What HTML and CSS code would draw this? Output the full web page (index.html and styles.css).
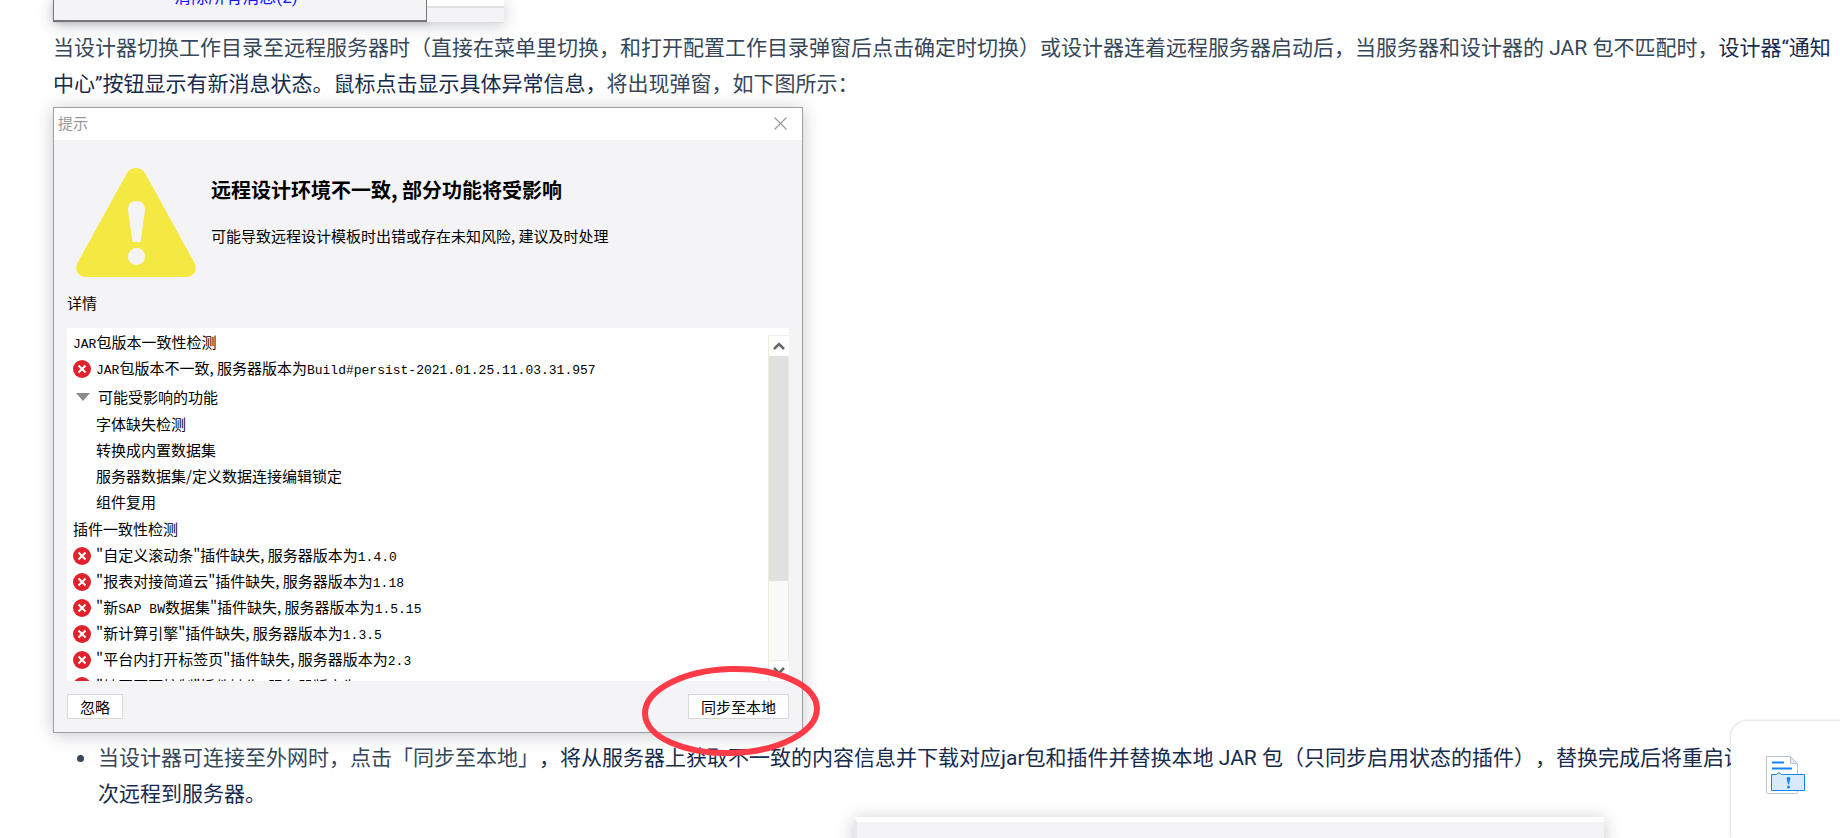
FILE: index.html
```html
<!DOCTYPE html>
<html lang="zh-CN">
<head>
    <meta charset="UTF-8">
    <meta name="viewport" content="width=device-width, initial-scale=1.0">
    <title>远程服务器</title>
    <link rel="stylesheet" href="styles.css">
</head>
<body>
    <svg class="defs" width="0" height="0">
        <symbol id="err" viewBox="0 0 18 18">
            <circle cx="9" cy="9" r="9" fill="#e0222d"/>
            <path d="M5.500 5.500l7 7M12.500 5.500l-7 7" stroke="#fff" stroke-width="2"/>
        </symbol>
    </svg>
    <main class="article">
        <div class="shot shot-top">
            <div class="shot-window">
                <a class="clear-link" href="#">清除所有消息(2)</a>
            </div>
            <div class="shot-side"></div>
        </div>

        <p class="text">当设计器切换工作目录至远程服务器时（直接在菜单里切换，和打开配置工作目录弹窗后点击确定时切换）或设计器连着远程服务器启动后，当服务器和设计器的 JAR 包不匹配时，<span class="dark">设计器“通知中心”按钮显示有新消息状态。鼠标点击显示具体异常信息，</span>将出现弹窗，如下图所示：</p>

        <section class="shot dialog">
            <header class="dialog-title">
                <span>提示</span>
                <button class="close" type="button" aria-label="关闭">
                    <svg width="13" height="13" viewBox="0 0 13 13"><path d="M.5 .5l12 12M12.5 .5l-12 12" stroke="#999" stroke-width="1.2"/></svg>
                </button>
            </header>
            <div class="dialog-body">
                <div class="alert">
                    <svg class="warn" width="120" height="110" viewBox="0 0 120 110">
                        <path d="M51 5Q54 0 60 0Q66 0 69 5L118 94Q121 100 119 104Q116 109 110 109H10Q4 109 1 104Q-1 99 2 94Z" fill="#f4e943"/>
                        <path d="M52 42Q52 33 60 33Q69 33 69 42L64.500 74H56.500Z" fill="#f4f4f7"/>
                        <circle cx="60.500" cy="88.500" r="8.500" fill="#f4f4f7"/>
                    </svg>
                    <div class="alert-text">
                        <h2>远程设计环境不一致, 部分功能将受影响</h2>
                        <p>可能导致远程设计模板时出错或存在未知风险, 建议及时处理</p>
                    </div>
                </div>
                <h3>详情</h3>
                <div class="details">
                    <div class="rows">
                        <div class="row"><span><span class="code">JAR</span>包版本一致性检测</span></div>
                        <div class="row"><svg class="err"><use href="#err"/></svg><span><span class="code">JAR</span>包版本不一致, 服务器版本为<span class="code">Build#persist-2021.01.25.11.03.31.957</span></span></div>
                        <div class="row toggle"><span class="caret"></span>可能受影响的功能</div>
                        <ul class="leaves">
                            <li>字体缺失检测</li>
                            <li>转换成内置数据集</li>
                            <li>服务器数据集/定义数据连接编辑锁定</li>
                            <li>组件复用</li>
                        </ul>
                        <div class="row plugins">插件一致性检测</div>
                        <div class="row"><svg class="err"><use href="#err"/></svg><span>"自定义滚动条"插件缺失, 服务器版本为<span class="code">1.4.0</span></span></div>
                        <div class="row"><svg class="err"><use href="#err"/></svg><span>"报表对接简道云"插件缺失, 服务器版本为<span class="code">1.18</span></span></div>
                        <div class="row"><svg class="err"><use href="#err"/></svg><span>"新<span class="code">SAP BW</span>数据集"插件缺失, 服务器版本为<span class="code">1.5.15</span></span></div>
                        <div class="row"><svg class="err"><use href="#err"/></svg><span>"新计算引擎"插件缺失, 服务器版本为<span class="code">1.3.5</span></span></div>
                        <div class="row"><svg class="err"><use href="#err"/></svg><span>"平台内打开标签页"插件缺失, 服务器版本为<span class="code">2.3</span></span></div>
                        <div class="row"><svg class="err"><use href="#err"/></svg><span>"地图页面控制"插件缺失, 服务器版本为</span></div>
                    </div>
                    <div class="scrollbar">
                        <button type="button" aria-label="向上"><svg width="12" height="8" viewBox="0 0 12 8"><path d="M1 7l5-5 5 5" fill="none" stroke="#666" stroke-width="2.500"/></svg></button>
                        <div class="track"><div class="thumb"></div></div>
                        <button type="button" aria-label="向下"><svg width="12" height="8" viewBox="0 0 12 8"><path d="M1 1l5 5 5-5" fill="none" stroke="#666" stroke-width="2.500"/></svg></button>
                    </div>
                </div>
                <footer class="actions">
                    <button type="button">忽略</button>
                    <button type="button">同步至本地</button>
                </footer>
            </div>
            <svg class="mark" width="180" height="92" viewBox="0 0 180 92">
                <ellipse cx="90" cy="46" rx="86" ry="42" fill="none" stroke="#ff3b48" stroke-width="6" transform="rotate(-2 90 46)"/>
            </svg>
        </section>

        <ul class="notes">
            <li class="text">当设计器可连接至外网时，点击「同步至本地」<span class="dark">，将从服务器上获取不一致的内容信息并下载对应jar包和插件并替换本地 JAR 包（只同步启用状态的插件），替换完成后将重启设计器，再次远程到服务器。</span></li>
        </ul>

        <div class="shot shot-next"></div>
    </main>

    <aside class="feedback">
        <button type="button" aria-label="文档反馈">
            <svg width="40" height="40" viewBox="0 0 40 40">
                <path d="M1.500 1.500H25L32.500 9V37.500Q32.500 38.500 31.500 38.500H2.500Q1.500 38.500 1.500 37.500Z" fill="#fff" stroke="#b9c4d6"/>
                <path d="M25.500 1.500V8.500H32.500Z" fill="#e3e7ee" stroke="#b9c4d6"/>
                <path d="M7 7.500H19M7 13.500H27" stroke="#1684fc" stroke-width="2"/>
                <path d="M6.500 19.500H11.500L14 17.500L16.500 19.500H39.500V35.500H6.500Z" fill="#d9eafd" stroke="#1684fc"/>
                <path d="M21.500 23Q23.500 21 25.500 23L24 29.500H23Z" fill="#1684fc"/>
                <circle cx="23.500" cy="32" r="1.500" fill="#1684fc"/>
            </svg>
        </button>
    </aside>
</body>
</html>
```

FILE: styles.css
```css
* {
    box-sizing: border-box;
}
body {
    margin: 0;
    height: 100vh;
    overflow: hidden;
    background: #fff;
    font-family: Roboto, "Noto Sans CJK SC", sans-serif;
    text-spacing-trim: space-all;
}
h2, h3, p, ul {
    margin: 0;
    padding: 0;
}
ul {
    list-style: none;
}
button {
    font-family: inherit;
    padding: 0;
    cursor: pointer;
}
.defs {
    display: none;
}
.article {
    padding: 0 6px 0 53px;
}
.text {
    font-size: 21px;
    line-height: 36px;
    color: #36475a;
}
.dark {
    color: #172b4d;
}
.shot {
    box-shadow: 0 2px 16px rgba(30, 40, 60, 0.25);
}

/* bottom of the message panel */
.shot-top {
    display: flex;
    width: 451px;
    height: 23px;
    margin-bottom: 7px;
    border-bottom: 1px solid #ddd;
}
.shot-window {
    display: flex;
    align-items: flex-end;
    justify-content: center;
    width: 374px;
    padding: 0 8px 13px 0;
    background: #f4f4f7;
    border: solid #777;
    border-width: 0 1px 2px;
    box-shadow: 2px 0 8px rgba(0, 0, 0, 0.2);
    overflow: hidden;
}
.clear-link {
    font-size: 17px;
    line-height: 20px;
    color: #1414ff;
    text-decoration: none;
}
.shot-side {
    flex: 1;
    background: #f4f4f7;
    border-top: 6px solid #fff;
    box-shadow: inset 0 2px #dfdfe1;
}

/* dialog */
.dialog {
    position: relative;
    z-index: 1;
    max-width: 750px;
    margin-top: 5px;
    background: #f4f4f7;
    border: 1px solid #a0a0a3;
    font-family: "Noto Sans CJK SC", sans-serif;
    font-size: 15px;
    line-height: 20px;
    color: #000;
}
.dialog-title {
    display: flex;
    justify-content: space-between;
    align-items: center;
    height: 32px;
    padding: 0 15px 2px 4px;
    background: #fff;
    color: #999;
}
.close {
    display: flex;
    border: none;
    background: none;
}
.dialog-body {
    padding: 28px 13px 13px;
}
.alert {
    display: flex;
    gap: 15px;
    padding-left: 9px;
}
.alert-text {
    padding-top: 8px;
}
h2 {
    font-size: 20px;
    line-height: 28px;
    margin-bottom: 22px;
}
h3 {
    margin: 15px 0;
    font-size: 15px;
    font-weight: normal;
}
.details {
    display: flex;
    height: 353px;
    background: #fff;
    overflow: hidden;
}
.rows {
    flex: 1;
    padding: 2px 0 0 6px;
    line-height: 26px;
}
.row {
    display: flex;
    align-items: center;
    gap: 5px;
    height: 26px;
    white-space: nowrap;
}
.toggle {
    gap: 8px;
    margin: 2px 0 1px;
    padding-left: 3px;
}
.leaves {
    padding-left: 23px;
}
.plugins {
    margin: 1px 0;
}
.code {
    font-family: "Liberation Mono", monospace;
    font-size: 13px;
}
.err {
    width: 18px;
    height: 18px;
}
.caret {
    border: solid transparent;
    border-width: 8px 7px 0;
    border-top-color: #8c8c8c;
}
.scrollbar {
    display: flex;
    flex-direction: column;
    width: 21px;
    margin-top: 7px;
    border-left: 1px solid #ececdc;
}
.scrollbar button {
    display: flex;
    align-items: center;
    justify-content: center;
    height: 21px;
    border: none;
    border-top: 1px solid #eee;
    background: #fff;
}
.track {
    flex: 1;
    background: #f9f9f8;
    border-right: 1px solid #ececdc;
}
.thumb {
    height: 74%;
    background: #e1e1e1;
}
.actions {
    display: flex;
    justify-content: space-between;
    margin-top: 13px;
}
.actions button {
    height: 25px;
    padding: 0 12px;
    background: #fff;
    border: 1px solid #d9d9dc;
    font-size: 15px;
    line-height: 20px;
    color: #000;
}
.mark {
    position: absolute;
    right: -19px;
    bottom: -25px;
}

/* notes under the dialog */
.notes {
    margin-top: 7px;
}
.notes li {
    position: relative;
    padding-left: 45px;
}
.notes li::before {
    content: "";
    position: absolute;
    left: 24px;
    top: 15px;
    width: 7px;
    height: 7px;
    border-radius: 50%;
    background: #36475a;
}
.shot-next {
    width: 750px;
    height: 300px;
    margin: 5px 0 0 801px;
    background: #f3f3f5;
    border-top: 5px solid #fff;
    border-left: 3px solid #e9e9eb;
}

/* floating feedback panel */
.feedback {
    position: fixed;
    right: 0;
    bottom: 0;
    z-index: 2;
    width: 109px;
    height: 117px;
    padding: 34px;
    background: #fff;
    border-radius: 16px 0 0 0;
    box-shadow: 0 0 3px rgba(0, 0, 0, 0.25);
}
.feedback button {
    display: flex;
    border: none;
    background: none;
}
```
